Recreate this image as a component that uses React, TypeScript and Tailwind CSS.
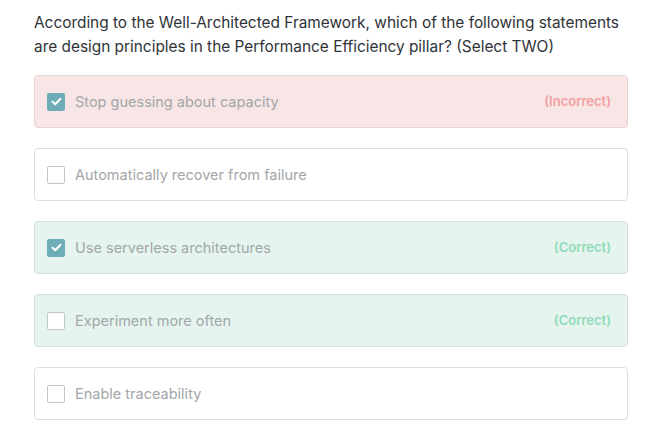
import React from 'react';

type Status = 'incorrect' | 'correct' | null;

interface Option {
  label: string;
  checked: boolean;
  status: Status;
}

const options: Option[] = [
  { label: 'Stop guessing about capacity', checked: true, status: 'incorrect' },
  { label: 'Automatically recover from failure', checked: false, status: null },
  { label: 'Use serverless architectures', checked: true, status: 'correct' },
  { label: 'Experiment more often', checked: false, status: 'correct' },
  { label: 'Enable traceability', checked: false, status: null },
];

const Checkbox: React.FC<{ checked: boolean }> = ({ checked }) =>
  checked ? (
    <span className="w-[18px] h-[18px] rounded-[2px] bg-[#6eadb8] flex items-center justify-center shrink-0">
      <svg width="11" height="9" viewBox="0 0 11 9" fill="none">
        <path d="M1.5 4.6L4.2 7.2L9.5 1.8" stroke="white" strokeWidth="2" strokeLinecap="round" strokeLinejoin="round" />
      </svg>
    </span>
  ) : (
    <span className="w-[18px] h-[18px] rounded-[2px] border border-[#c4c7cb] bg-white shrink-0" />
  );

export default function App() {
  return (
    <div className="min-h-screen bg-white px-[34px] pt-[11px]" style={{ fontFamily: '"Inter", "Open Sans", sans-serif' }}>
      <p className="text-[15.4px] leading-[24px] text-[#2f3337] mb-[16px] w-[600px]">
        According to the Well-Architected Framework, which of the following statements are design principles in the Performance Efficiency pillar? (Select TWO)
      </p>

      <div className="flex flex-col gap-[20px] w-[594px]">
        {options.map((opt, i) => {
          const box =
            opt.status === 'incorrect'
              ? 'bg-[#f8e5e5] border-[#e6d3d4]'
              : opt.status === 'correct'
              ? 'bg-[#e5f4ee] border-[#d0e0d9]'
              : 'bg-white border-[#dcdde0]';
          return (
            <div key={i} className={`h-[53px] rounded-[4px] border flex items-center pl-[12px] pr-[16px] ${box}`}>
              <Checkbox checked={opt.checked} />
              <span className="ml-[10px] text-[14.5px] text-[#a3a6aa] flex-1">{opt.label}</span>
              {opt.status === 'incorrect' && (
                <span className="text-[13px] font-semibold text-[#f2a0a2]">(Incorrect)</span>
              )}
              {opt.status === 'correct' && (
                <span className="text-[13px] font-semibold text-[#8fdbb8]">(Correct)</span>
              )}
            </div>
          );
        })}
      </div>
    </div>
  );
}
